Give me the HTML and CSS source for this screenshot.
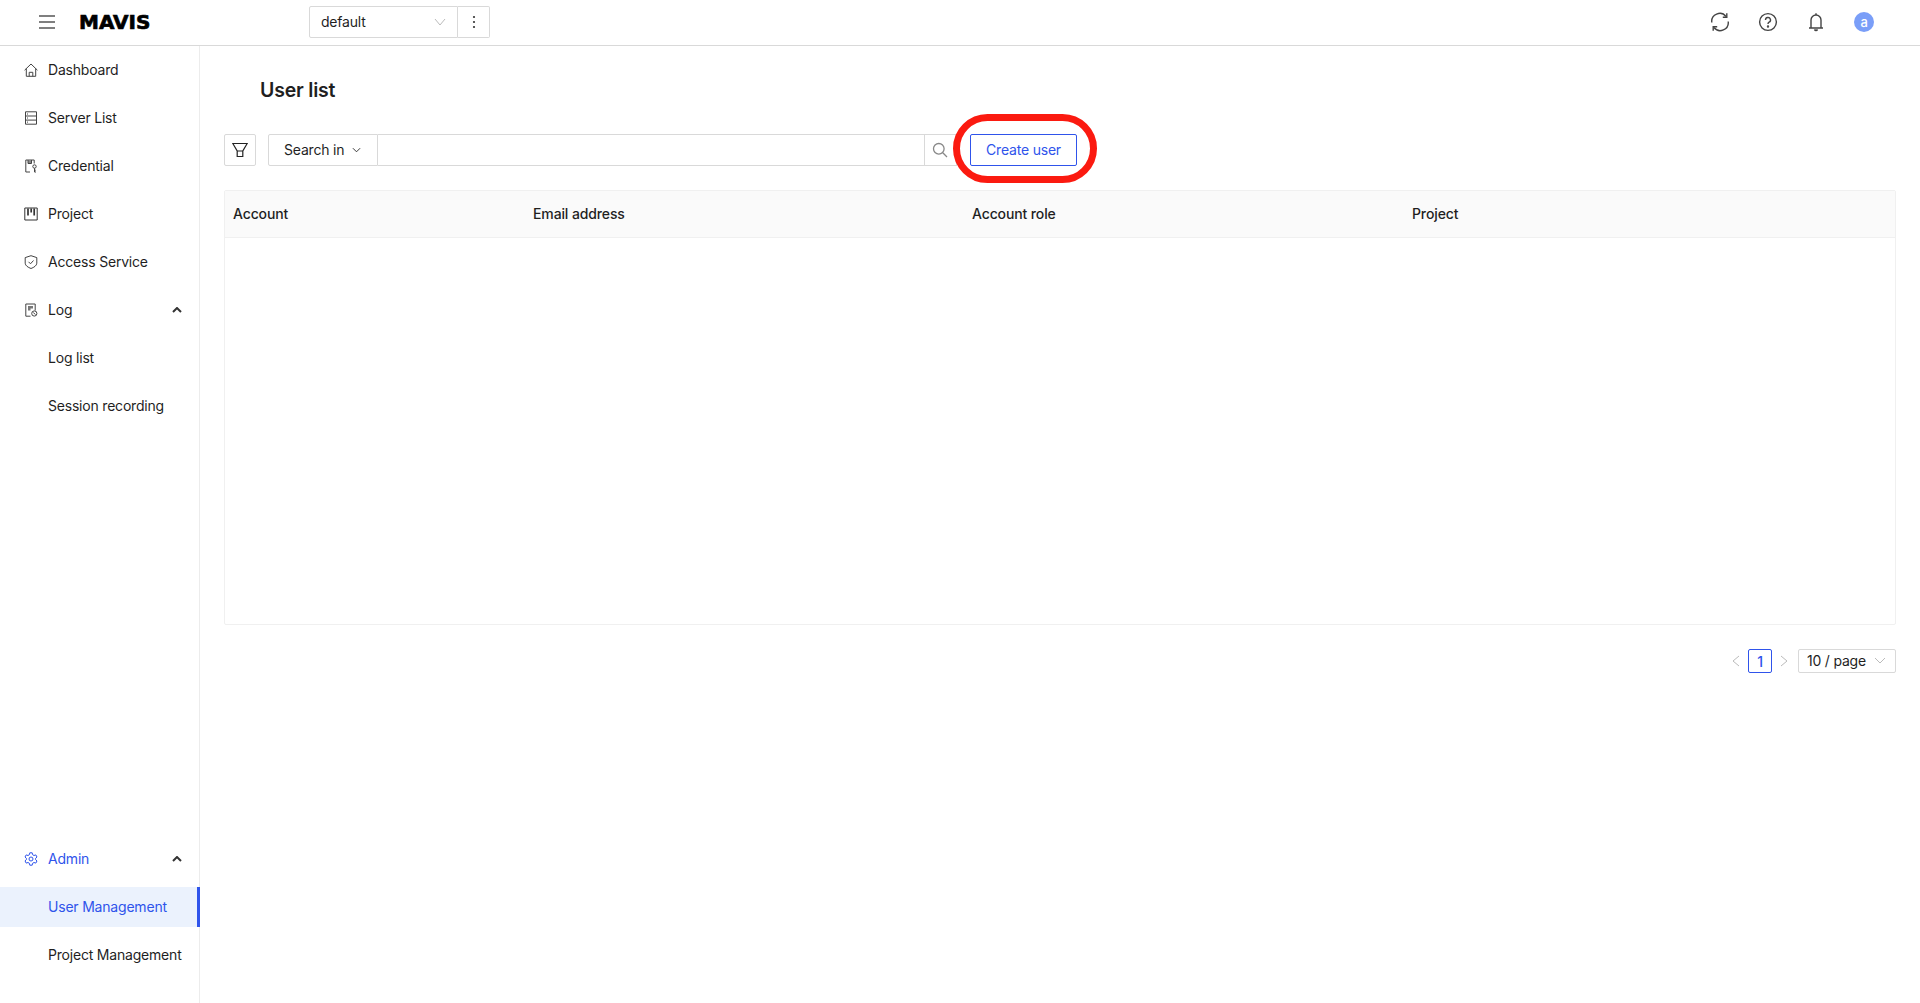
FILE: index.html
```html
<!DOCTYPE html>
<html lang="en">
<head>
<meta charset="utf-8">
<title>User list</title>
<link rel="stylesheet" href="styles.css">
</head>
<body>
<header class="topbar">
  <button class="hamburger" aria-label="Menu">
    <svg width="18" height="14" viewBox="0 0 18 14" fill="none" stroke="#555" stroke-width="1.4"><path d="M1 1h16M1 7h16M1 13h16"/></svg>
  </button>
  <div class="logo">MAVIS</div>
  <div class="workspace">
    <div class="workspace-select"><span>default</span>
      <svg class="chev" width="12" height="8" viewBox="0 0 12 8" fill="none" stroke="#bbb"><path d="M1 1l5 6 5-6"/></svg>
    </div>
    <div class="workspace-more"><svg width="4" height="14" viewBox="0 0 4 14" fill="#333"><circle cx="2" cy="2" r="1.1"/><circle cx="2" cy="7" r="1.1"/><circle cx="2" cy="12" r="1.1"/></svg></div>
  </div>
  <div class="top-actions">
    <svg class="top-icon" viewBox="0 0 20 20" fill="none" stroke="#444" stroke-width="1.4"><path d="M1.800 10.500A8 8 0 0 1 16 4.500"/><path d="M18.200 9.500A8 8 0 0 1 4 15.500"/><path d="M16.800 1.200V5.200h-4M3.200 18.800V14.800h4"/></svg>
    <svg class="top-icon" viewBox="0 0 20 20" fill="none" stroke="#444" stroke-width="1.4"><circle cx="10" cy="10" r="8.400"/><path d="M7.500 8a2.500 2.500 0 1 1 3.600 2.200c-.8.400-1.100.9-1.100 1.800"/><circle cx="10" cy="14.500" r=".5" fill="#444"/></svg>
    <svg class="top-icon" viewBox="0 0 20 20" fill="none" stroke="#444" stroke-width="1.4"><path d="M3 16h14M5 16V8a5 5 0 0 1 10 0v8"/><path d="M10 1.200V3"/><path d="M8.500 17.600a1.600 1.600 0 0 0 3 0" fill="#444"/></svg>
    <div class="avatar">a</div>
  </div>
</header>
<div class="shell">
  <aside class="sidebar">
    <nav class="nav">
      <a class="nav-item"><svg class="nav-icon" viewBox="0 0 14 14" fill="none" stroke="#444"><path d="M.6 7.200 7 1l6.400 6.200M2.300 5.600v7.700h9.400V5.600M5.200 13.300V9.300h3.600v4"/></svg>Dashboard</a>
      <a class="nav-item"><svg class="nav-icon" viewBox="0 0 14 14" fill="none" stroke="#444"><path d="M1.500.8h11v12.400h-11zM1.500 5h11M1.500 9.100h11M3 3h1M3 7h1M3 11.100h1"/></svg>Server List</a>
      <a class="nav-item"><svg class="nav-icon" viewBox="0 0 14 14" fill="none" stroke="#444"><path d="M6 13H1.800V1h8.400v3.500"/><path d="M4 1v3.500h3.500V1" fill="#888"/><circle cx="10.500" cy="7.500" r="1.700"/><path d="M10.500 9.200V13h1.500M10.500 11.200h1.300"/></svg>Credential</a>
      <a class="nav-item"><svg class="nav-icon" viewBox="0 0 14 14" fill="none" stroke="#333"><path d="M.8 1h12.400v12H.8z"/><path d="M4 1.500v7M7.200 1.500v4M10.200 1.500v7" stroke-width="1.700"/></svg>Project</a>
      <a class="nav-item"><svg class="nav-icon" viewBox="0 0 14 14" fill="none" stroke="#444"><path d="M7 .7 12.800 2.600v5.600c0 2.400-2.800 4.200-5.800 5.300C4 12.400 1.200 10.600 1.200 8.200V2.600z"/><path d="m4.500 6.800 2 2 3-3.300"/></svg>Access Service</a>
      <a class="nav-item"><svg class="nav-icon" viewBox="0 0 14 14" fill="none" stroke="#444"><path d="M6.500 13.200H1.800V1h9.400v6.500"/><path d="M4 3h5v2.500H6.500V7.500H4z" fill="#777" stroke="none"/><circle cx="10.300" cy="10.500" r="2.600"/><path d="m9.200 9.400 2.200 2.200"/></svg>Log
        <svg class="caret" viewBox="0 0 10 6" fill="none" stroke="#333" stroke-width="2"><path d="m1 5 4-4 4 4"/></svg></a>
      <a class="nav-item sub">Log list</a>
      <a class="nav-item sub">Session recording</a>
    </nav>
    <nav class="nav">
      <a class="nav-item admin"><svg class="nav-icon" viewBox="0 0 14 14" fill="none" stroke="#2f54eb"><path d="M5.800.8h2.400l.4 1.900 1.400.8 1.800-.6 1.200 2.100-1.400 1.300v1.400l1.400 1.300-1.200 2.100-1.800-.6-1.400.8-.4 1.900H5.800l-.4-1.900-1.400-.8-1.800.6L1 8.900 2.400 7.600V6.300L1 5l1.200-2.100 1.800.6 1.400-.8z"/><circle cx="7" cy="7" r="2"/></svg>Admin
        <svg class="caret" viewBox="0 0 10 6" fill="none" stroke="#333" stroke-width="2"><path d="m1 5 4-4 4 4"/></svg></a>
      <a class="nav-item sub active">User Management</a>
      <a class="nav-item sub">Project Management</a>
    </nav>
  </aside>
  <main class="content">
    <h1 class="title">User list</h1>
    <div class="toolbar">
      <button class="filter-btn" aria-label="Filter">
        <svg width="16" height="16" viewBox="0 0 16 16" fill="none" stroke="#222" stroke-width="1.200"><path d="M.8 1.500h14.400L10.800 9v5.500H5.200V9zM5.200 9h5.600"/></svg>
      </button>
      <div class="search">
        <div class="search-scope">Search in
          <svg width="9" height="6" viewBox="0 0 10 6" fill="none" stroke="#222"><path d="m1 1 4 4 4-4"/></svg>
        </div>
        <div class="search-input"></div>
        <div class="search-btn">
          <svg width="16" height="16" viewBox="0 0 16 16" fill="none" stroke="#888" stroke-width="1.300"><circle cx="6.800" cy="6.800" r="5.300"/><path d="m10.800 10.800 4.200 4.200"/></svg>
        </div>
      </div>
      <button class="create-btn">Create user<span class="ring"></span></button>
    </div>
    <section class="table">
      <div class="table-head">
        <div>Account</div>
        <div>Email address</div>
        <div>Account role</div>
        <div>Project</div>
      </div>
    </section>
    <div class="pagination">
      <svg class="page-arrow" viewBox="0 0 8 12" fill="none" stroke="#bbb"><path d="M7 1 1 6l6 5"/></svg>
      <div class="page-current">1</div>
      <svg class="page-arrow" viewBox="0 0 8 12" fill="none" stroke="#bbb"><path d="m1 1 6 5-6 5"/></svg>
      <div class="page-size">10 / page
        <svg width="12" height="7" viewBox="0 0 12 7" fill="none" stroke="#bbb"><path d="m1 1 5 5 5-5"/></svg>
      </div>
    </div>
  </main>
</div>
</body>
</html>
```
FILE: styles.css
```css
* { box-sizing: border-box; }
html, body { margin: 0; height: 100%; overflow: hidden; }
body {
  display: flex;
  flex-direction: column;
  font-family: Inter, "Liberation Sans", sans-serif;
  font-size: 14px;
  letter-spacing: -.2px;
  color: #1f1f1f;
  background: #fff;
}
button { font: inherit; letter-spacing: inherit; color: inherit; background: #fff; padding: 0; }

.topbar {
  flex: 0 0 46px;
  display: flex;
  align-items: center;
  padding-left: 38px;
  padding-bottom: 1px;
  border-bottom: 1px solid #d9d9d9;
}
.hamburger { display: flex; border: 0; margin-right: 23px; }
.logo {
  width: 230px;
  font-family: "DejaVu Sans", sans-serif;
  font-weight: 700;
  font-size: 20px;
  line-height: 22px;
  letter-spacing: 0;
  color: #000;
  -webkit-text-stroke: .7px #000;
}
.workspace { display: flex; height: 32px; }
.workspace-select {
  width: 149px;
  display: flex;
  align-items: center;
  justify-content: space-between;
  padding: 0 11px 1px 11px;
  border: 1px solid #d9d9d9;
  border-radius: 2px 0 0 2px;
}
.workspace-more {
  width: 32px;
  display: flex;
  align-items: center;
  justify-content: center;
  border: 1px solid #d9d9d9;
  border-left-width: 0;
  border-radius: 0 2px 2px 0;
}
.top-actions {
  margin-left: auto;
  margin-right: 46px;
  display: flex;
  align-items: center;
  gap: 28px;
}
.top-icon { width: 20px; height: 20px; display: block; }
.avatar {
  width: 20px;
  height: 20px;
  border-radius: 50%;
  background: #7a9ef8;
  color: #fff;
  font-size: 13px;
  font-weight: 500;
  display: flex;
  align-items: center;
  justify-content: center;
}

.shell { flex: 1; display: flex; min-height: 0; }
.sidebar {
  flex: 0 0 200px;
  display: flex;
  flex-direction: column;
  justify-content: space-between;
  padding: 4px 0 28px;
  border-right: 1px solid #ececec;
}
.nav { display: flex; flex-direction: column; gap: 8px; }
.nav-item {
  height: 40px;
  display: flex;
  align-items: center;
  gap: 10px;
  padding: 0 17px 1px 24px;
  white-space: nowrap;
}
.nav-icon { width: 14px; height: 14px; flex: none; }
.caret { width: 10px; height: 6px; margin-left: auto; }
.sub { padding-left: 48px; }
.admin { color: #2f54eb; }
.active {
  color: #2f54eb;
  background: #ebf2fd;
  border-right: 3px solid #2f54eb;
  margin-right: -1px;
}

.content { flex: 1; min-width: 0; padding: 0 24px; }
.title {
  margin: 0;
  padding: 32px 0 0 36px;
  font-size: 19.500px;
  line-height: 24px;
  font-weight: 600;
}
.toolbar { display: flex; align-items: center; margin-top: 32px; height: 32px; }
.filter-btn {
  width: 32px;
  height: 32px;
  display: flex;
  align-items: center;
  justify-content: center;
  border: 1px solid #d9d9d9;
  border-radius: 2px;
  margin-right: 12px;
}
.search { display: flex; width: 689px; height: 32px; margin-right: 13px; }
.search-scope {
  width: 110px;
  display: flex;
  align-items: center;
  justify-content: space-between;
  padding: 0 16px 1px 15px;
  border: 1px solid #d9d9d9;
  border-radius: 2px 0 0 2px;
}
.search-input {
  flex: 1;
  border: 1px solid #d9d9d9;
  border-left-width: 0;
}
.search-btn {
  width: 32px;
  display: flex;
  align-items: center;
  justify-content: center;
  padding-right: 2px;
  border: 1px solid #d9d9d9;
  border-left-width: 0;
}
.create-btn {
  position: relative;
  width: 107px;
  height: 32px;
  padding-bottom: 1px;
  border: 1px solid #2f54eb;
  border-radius: 2px;
  color: #2f54eb;
}
.ring {
  position: absolute;
  left: -18px;
  right: -21px;
  top: -21px;
  bottom: -18px;
  border: 7px solid #fb1a10;
  border-radius: 36px;
  pointer-events: none;
}

.table {
  margin-top: 24px;
  height: 435px;
  border: 1px solid #f0f0f0;
  border-radius: 2px;
}
.table-head {
  height: 47px;
  display: grid;
  grid-template-columns: 300px 439px 440px 1fr;
  align-items: center;
  padding-bottom: 1px;
  background: #fafafa;
  border-bottom: 1px solid #f0f0f0;
  font-weight: 500;
  letter-spacing: -.12px;
}
.table-head div { padding-left: 8px; }

.pagination {
  display: flex;
  align-items: center;
  justify-content: flex-end;
  margin-top: 24px;
  height: 24px;
}
.page-arrow { width: 8px; height: 12px; }
.page-current {
  width: 24px;
  height: 24px;
  margin: 0 8px;
  display: flex;
  align-items: center;
  justify-content: center;
  border: 1px solid #2f54eb;
  border-radius: 2px;
  color: #2f54eb;
  font-weight: 500;
}
.page-size {
  width: 98px;
  height: 24px;
  margin-left: 10px;
  display: flex;
  align-items: center;
  justify-content: space-between;
  padding: 0 9px 1px 8px;
  border: 1px solid #d9d9d9;
  border-radius: 2px;
}
```
